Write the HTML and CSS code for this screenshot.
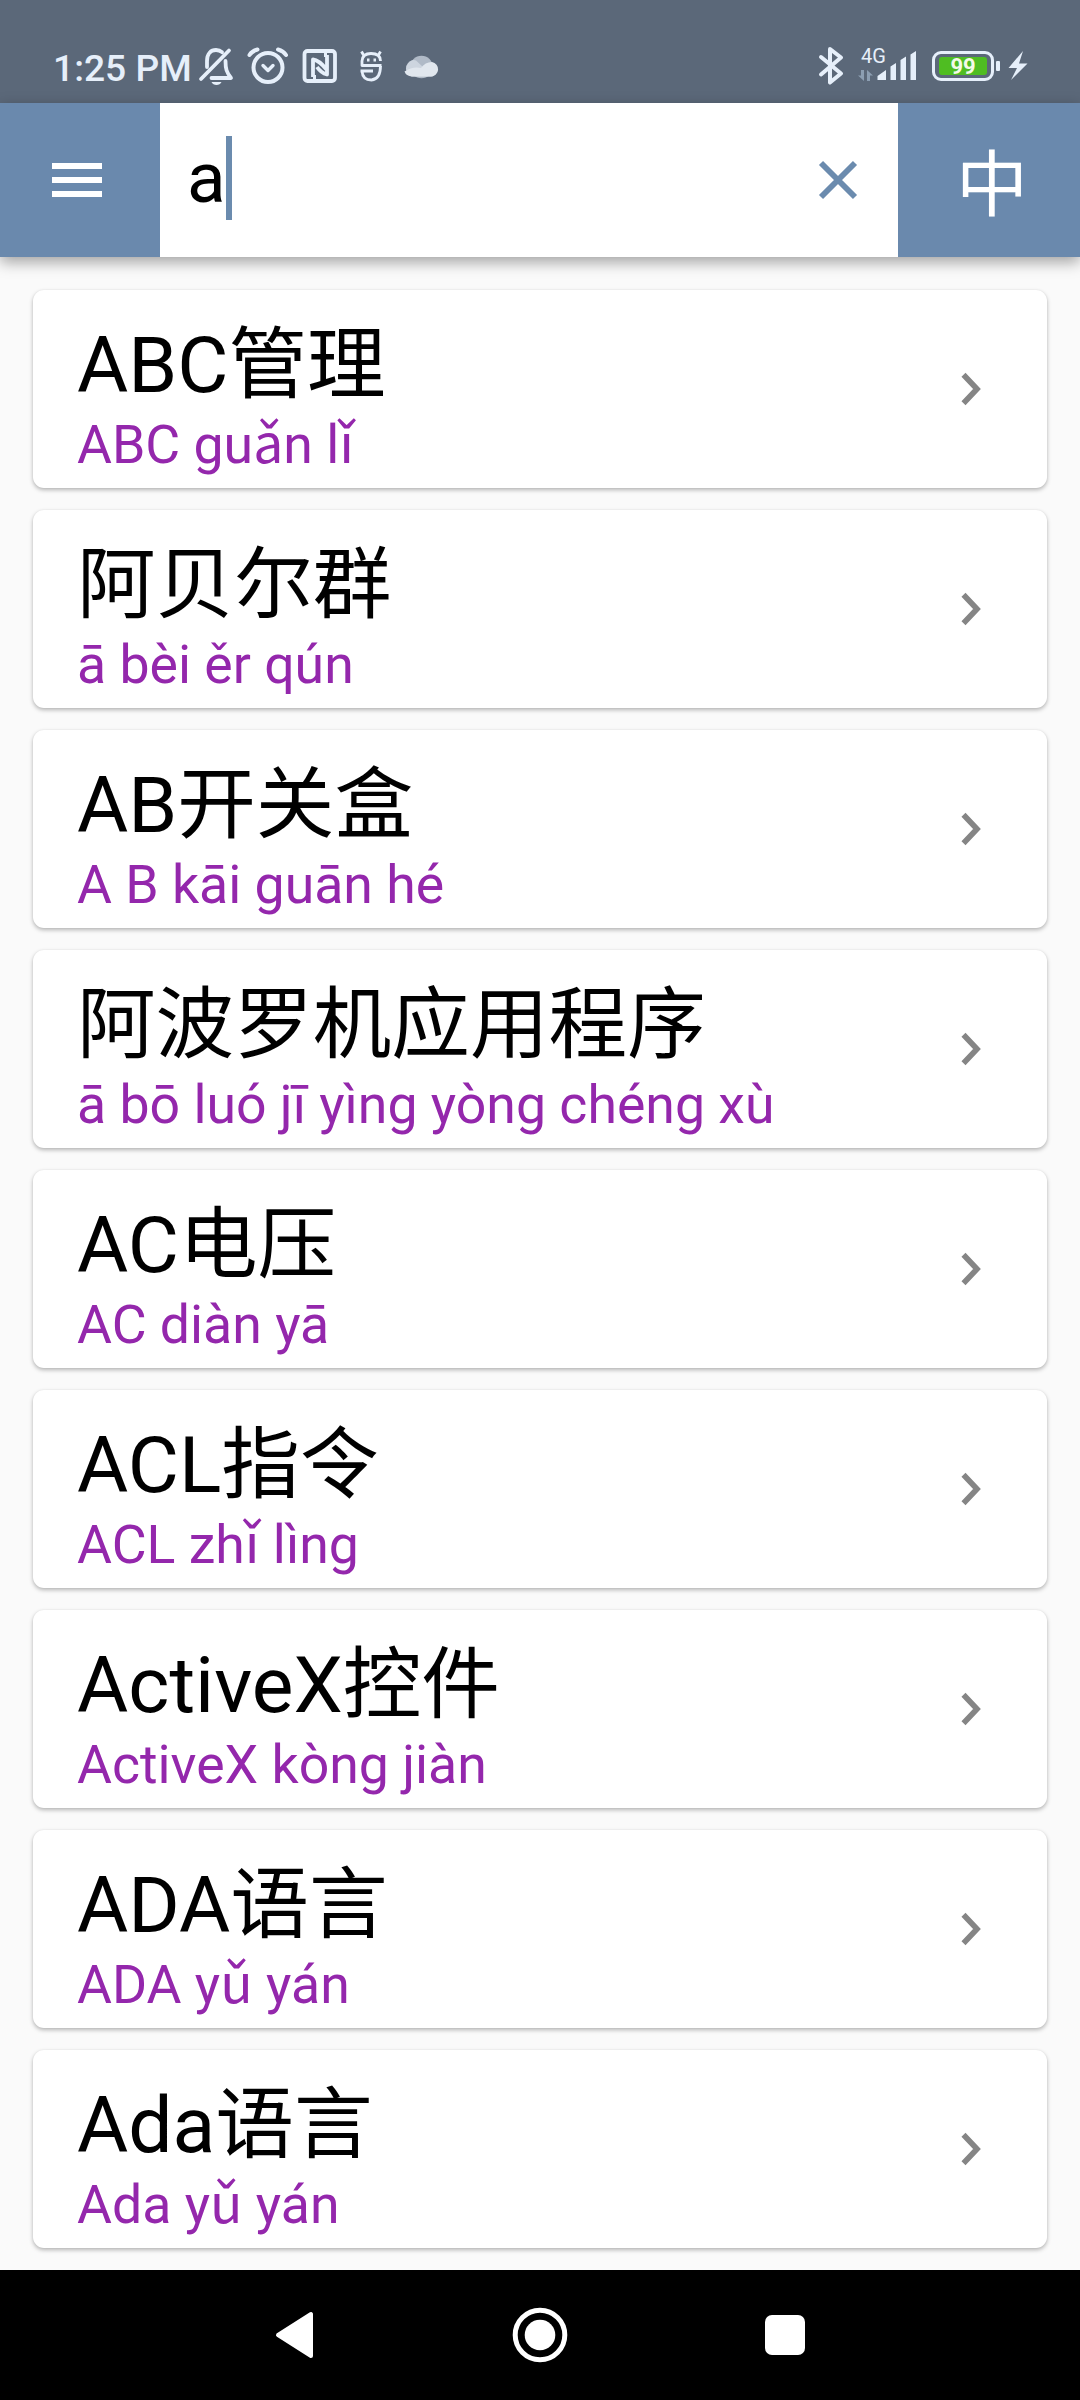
FILE: index.html
```html
<!DOCTYPE html>
<html lang="zh-CN">
<head>
    <meta charset="UTF-8">
    <meta name="viewport" content="width=device-width, initial-scale=1.0">
    <title>Dictionary</title>
    <link rel="stylesheet" href="styles.css">
</head>
<body>
    <!-- shared chevron -->
    <svg class="defs" width="0" height="0">
        <symbol id="chevron" viewBox="0 0 20 34">
            <path d="M2.5 2.8L16 17L2.5 31.2" fill="none" stroke="#858585" stroke-width="5.6"/>
        </symbol>
    </svg>

    <div class="status-bar">
        <span class="time">1:25 PM</span>
        <div class="status-left">
            <svg width="36" height="40" viewBox="198 46 36 40" fill="none" stroke="#e6effa" stroke-width="3.8" stroke-linecap="round" stroke-linejoin="round">
                <path d="M207 67V61C207 53.500 211 50 216 50C218.500 50 220.500 50.800 222 52.200M225.500 61C225.500 69 226.500 72 231 78H211.500M201 79L229 50.500"/>
                <path d="M211.500 82H221.500C220 86 213 86 211.500 82Z" fill="#e6effa" stroke="none"/>
            </svg>
            <svg width="42" height="40" viewBox="247 46 42 40" fill="none" stroke="#e6effa" stroke-width="4" stroke-linecap="round" stroke-linejoin="round">
                <circle cx="268" cy="67.500" r="14.500"/>
                <path d="M249.500 55Q252 51 257.500 49.500M286 55Q283.500 51 278 49.500"/>
                <path d="M263 65.500L268 70.500L273 65.500" stroke-width="3.400"/>
            </svg>
            <svg width="36" height="40" viewBox="302 46 36 40" fill="none" stroke="#e6effa" stroke-width="3.800" stroke-linejoin="round">
                <rect x="304.500" y="51" width="30.500" height="30" rx="3"/>
                <path d="M313 77V59.500Q319 60 327 70M327 55V74.500Q321 73 317 67M313 77H316M324 55H327"/>
            </svg>
            <svg width="24" height="40" viewBox="359 46 24 40" fill="none" stroke="#e6effa" stroke-width="2.800" stroke-linejoin="round">
                <path d="M381.500 65.500H362V61Q362.500 53.500 371 53.500Q380.500 53.500 380.500 61M363.500 55L361.500 51.500M378.500 55L380.500 51.500"/>
                <path d="M360.500 71H373M362 71Q362.500 80 371.500 80Q380.500 79 380.500 66"/>
                <path d="M367 60h2.500M373.500 60h2.500"/>
            </svg>
            <svg width="36" height="40" viewBox="403 46 36 40">
                <circle cx="421.500" cy="67" r="11.300" fill="#b0bac7"/>
                <path d="M411.500 76.500A7.700 8.200 0 1 1 416 60.500L433 76.500Z" fill="#cdd5df"/>
                <path d="M432 62A7.300 7.300 0 0 1 431 76.500H412Q406 76 404.500 71.500Q413 66 421 68Q425 62 432 62Z" fill="#e1e7ee"/>
            </svg>
        </div>
        <div class="status-right">
            <svg width="26" height="42" viewBox="818 45 26 42" fill="none" stroke="#e6effa" stroke-width="4" stroke-linecap="round" stroke-linejoin="round">
                <path d="M821 57L841 73.500L830 82.500V49L841 57.500L821 74.500"/>
            </svg>
            <div class="signal">
                <span class="network">4G</span>
                <svg width="60" height="32" viewBox="858 50 60 32" fill="#e6effa">
                    <path d="M877.500 76L886 70V80H877.500ZM890.500 66.500L896 63V80H890.500ZM900.500 60L906 56.500V80H900.500ZM910.500 54.500L916 51V80H910.500Z"/>
                    <path d="M861 70H864V81L858 75.500H861ZM867 70L873 75.500H870V81H867Z" fill="#8c9eb2"/>
                </svg>
            </div>
            <div class="battery"><span>99</span></div>
            <svg width="20" height="32" viewBox="1008 51 20 32">
                <path d="M1023 52L1008.500 69H1017L1011 81L1027.500 64.500H1019Z" fill="#e6effa"/>
            </svg>
        </div>
    </div>

    <header class="app-bar">
        <div class="menu">
            <span></span>
            <span></span>
            <span></span>
        </div>
        <div class="search">
            <span class="query">a</span>
            <span class="cursor"></span>
            <svg class="clear" width="40" height="40" viewBox="0 0 40 40">
                <path d="M3 3L37 37M37 3L3 37" stroke="#6b8bae" stroke-width="5.800"/>
            </svg>
        </div>
        <div class="lang">中</div>
    </header>

    <main class="results">
        <div class="card">
            <div>
                <h2>ABC管理</h2>
                <p>ABC guǎn lǐ</p>
            </div>
            <svg class="chevron"><use href="#chevron"/></svg>
        </div>
        <div class="card">
            <div>
                <h2>阿贝尔群</h2>
                <p>ā bèi ěr qún</p>
            </div>
            <svg class="chevron"><use href="#chevron"/></svg>
        </div>
        <div class="card">
            <div>
                <h2>AB开关盒</h2>
                <p>A B kāi guān hé</p>
            </div>
            <svg class="chevron"><use href="#chevron"/></svg>
        </div>
        <div class="card">
            <div>
                <h2>阿波罗机应用程序</h2>
                <p>ā bō luó jī yìng yòng chéng xù</p>
            </div>
            <svg class="chevron"><use href="#chevron"/></svg>
        </div>
        <div class="card">
            <div>
                <h2>AC电压</h2>
                <p>AC diàn yā</p>
            </div>
            <svg class="chevron"><use href="#chevron"/></svg>
        </div>
        <div class="card">
            <div>
                <h2>ACL指令</h2>
                <p>ACL zhǐ lìng</p>
            </div>
            <svg class="chevron"><use href="#chevron"/></svg>
        </div>
        <div class="card">
            <div>
                <h2>ActiveX控件</h2>
                <p>ActiveX kòng jiàn</p>
            </div>
            <svg class="chevron"><use href="#chevron"/></svg>
        </div>
        <div class="card">
            <div>
                <h2>ADA语言</h2>
                <p>ADA yǔ yán</p>
            </div>
            <svg class="chevron"><use href="#chevron"/></svg>
        </div>
        <div class="card">
            <div>
                <h2>Ada语言</h2>
                <p>Ada yǔ yán</p>
            </div>
            <svg class="chevron"><use href="#chevron"/></svg>
        </div>
    </main>

    <nav class="nav-bar">
        <svg width="40" height="48" viewBox="0 0 40 48">
            <path d="M4 24L37 3V45Z" fill="#fff" stroke="#fff" stroke-width="4" stroke-linejoin="round"/>
        </svg>
        <svg width="56" height="56" viewBox="0 0 56 56">
            <circle cx="28" cy="28" r="24.800" fill="none" stroke="#fff" stroke-width="5"/>
            <circle cx="28" cy="28" r="15.300" fill="#fff"/>
        </svg>
        <span class="recents"></span>
    </nav>
</body>
</html>
```

FILE: styles.css
```css
body {
    margin: 0;
    width: 1080px;
    height: 2400px;
    display: flex;
    flex-direction: column;
    overflow: hidden;
    font-family: Roboto, "Noto Sans CJK SC", sans-serif;
    background-color: #fafafa;
}
svg {
    display: block;
    flex: none;
}
.defs {
    display: none;
}
h2, p {
    margin: 0;
    font-weight: normal;
    white-space: nowrap;
}

/* status bar */
.status-bar {
    display: flex;
    align-items: center;
    height: 75px;
    padding: 28px 52px 0 53px;
    background-color: #5b6879;
    color: #e6effa;
}
.time {
    width: 145px;
    font-size: 37.2px;
    font-weight: 500;
    line-height: 40px;
    margin-top: 4px;
    white-space: nowrap;
}
.status-left {
    display: flex;
    gap: 13px;
}
.status-left svg:nth-child(4) {
    margin: 0 7px 0 8px;
}
.status-right {
    display: flex;
    align-items: center;
    margin-left: auto;
}
.signal {
    position: relative;
    margin: 0 14px;
}
.network {
    position: absolute;
    left: 3px;
    top: -4px;
    font-size: 20px;
    line-height: 20px;
}
.battery {
    position: relative;
    display: flex;
    width: 48px;
    height: 18px;
    padding: 3px 4px;
    margin-right: 14px;
    border: 3px solid #e6effa;
    border-radius: 9px;
}
.battery span {
    flex: 1;
    background-color: #4fbd22;
    border-radius: 3px;
    color: #f4fae8;
    font-size: 22px;
    font-weight: 700;
    line-height: 19px;
    text-align: center;
}
.battery::after {
    content: "";
    position: absolute;
    right: -9px;
    top: 4px;
    width: 4px;
    height: 10px;
    margin-top: 3px;
    border-radius: 1px;
    background-color: #e6effa;
}

/* app bar */
.app-bar {
    display: flex;
    height: 154px;
    background-color: #6a89ad;
    box-shadow: 0 5px 14px rgba(0, 0, 0, 0.36);
}
.menu {
    display: flex;
    flex-direction: column;
    justify-content: center;
    gap: 8px;
    width: 108px;
    padding-left: 52px;
}
.menu span {
    width: 50px;
    height: 6px;
    background-color: #fff;
}
.search {
    display: flex;
    align-items: center;
    width: 671px;
    padding: 0 40px 0 27px;
    background-color: #fff;
}
.query {
    margin-bottom: 5px;
    font-size: 71px;
    line-height: 84px;
    color: #000;
}
.cursor {
    width: 6px;
    height: 84px;
    margin-bottom: 4px;
    background-color: #6b8bae;
}
.clear {
    margin-left: auto;
}
.lang {
    flex: 1;
    padding-left: 6px;
    color: #fff;
    font-family: "Noto Sans CJK SC", sans-serif;
    font-size: 72px;
    line-height: 152px;
    text-align: center;
}

/* result list */
.results {
    flex: 1;
    display: flex;
    flex-direction: column;
    gap: 22px;
    padding: 33px 33px 0;
}
.card {
    display: flex;
    align-items: center;
    justify-content: space-between;
    height: 198px;
    padding: 0 66px 0 44px;
    border-radius: 11px;
    background-color: #fff;
    box-shadow: 0 2px 4px rgba(0, 0, 0, 0.28), 0 0 2px rgba(0, 0, 0, 0.06);
}
.card > div {
    padding-top: 20px;
}
.card h2 {
    font-size: 78.6px;
    line-height: 92px;
    color: #000;
}
.card p {
    font-size: 53.6px;
    line-height: 68px;
    color: #9427ac;
}
.chevron {
    width: 20px;
    height: 34px;
}

/* navigation bar */
.nav-bar {
    display: flex;
    align-items: center;
    justify-content: space-between;
    height: 130px;
    padding: 0 275px 0 274px;
    background-color: #000;
}
.recents {
    width: 40px;
    height: 40px;
    border-radius: 7px;
    background-color: #fff;
}
```
